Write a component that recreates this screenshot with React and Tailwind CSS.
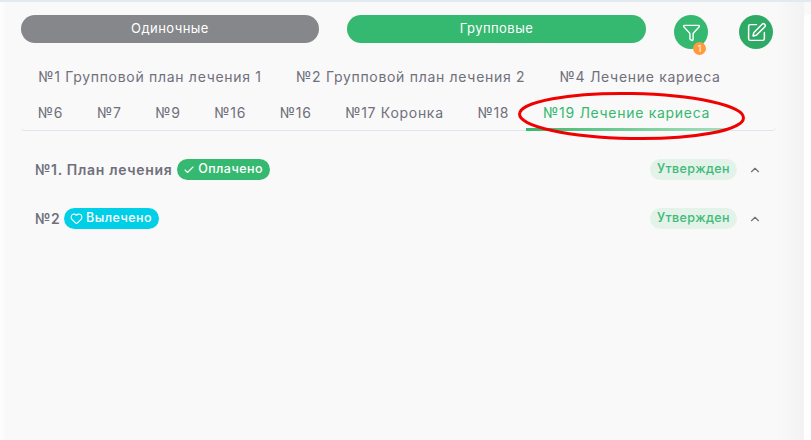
import React from "react";
import { Filter, SquarePen, Check, Heart, ChevronUp } from "lucide-react";

const font = { fontFamily: "Inter, 'Noto Sans', sans-serif" };
const row1 = ["№1 Групповой план лечения 1", "№2 Групповой план лечения 2", "№4 Лечение кариеса"];
const row2 = ["№6", "№7", "№9", "№16", "№16", "№17 Коронка", "№18"];

function Tab({ children, active, pad }) {
  return (
    <div className={"relative h-9 flex items-center text-[14px] tracking-[0.7px] whitespace-nowrap " + pad + " " + (active ? "text-[#35b86f]" : "text-[#70707c]")}>
      {children}
      {active && <div className="absolute left-0 right-0 -bottom-[1px] h-[3px] bg-gradient-to-r from-[#35b86f] to-[#a5dfbf]" />}
    </div>
  );
}

function Row({ title, badge }) {
  return (
    <div className="h-[49px] flex items-center pl-[14px] pr-[14px]">
      <span className="text-[14px] font-semibold tracking-[0.7px] text-[#70707c]">{title}</span>
      {badge}
      <span className="ml-auto h-[21px] w-[87px] rounded-full bg-[#e3f3e9] text-[#3fba77] text-[12.5px] font-medium tracking-[0.4px] flex items-center justify-center">Утвержден</span>
      <ChevronUp size={14} strokeWidth={2} className="ml-[11px] text-[#70707c]" />
    </div>
  );
}

export default function App() {
  return (
    <div style={font} className="relative w-[811px] h-[440px] overflow-hidden bg-[#f9f9f9] border-t-2 border-[#e3e9f1]">
      <div className="flex items-start pl-[21px] pt-[13px] w-[780px]">
        <button className="w-[298px] h-[28px] rounded-[14px] bg-[#85878a] text-white text-[13px] tracking-[0.45px]">Одиночные</button>
        <button className="ml-[28px] w-[299px] h-[28px] rounded-[14px] bg-[#35b86f] text-white text-[13px] tracking-[0.45px]">Групповые</button>
        <div className="relative ml-[28px] w-[34px] h-[34px] rounded-full bg-[#35b86f] flex items-center justify-center text-white">
          <Filter size={19} strokeWidth={1.8} />
          <span className="absolute left-[19px] top-[27px] w-[13px] h-[13px] rounded-full bg-[#ff9a3d] text-[9px] leading-[13px] text-center text-white">1</span>
        </div>
        <div className="ml-[31px] w-[34px] h-[34px] rounded-full bg-[#2faa66] flex items-center justify-center text-white">
          <SquarePen size={21} strokeWidth={1.7} />
        </div>
      </div>

      <div className="ml-[21px] mt-[9px] w-[755px] border-b border-[#dfe6ee] rounded-b-[4px]">
        <div className="flex">{row1.map((t) => <Tab key={t} pad="px-[17.15px]">{t}</Tab>)}</div>
        <div className="flex">
          {row2.map((t, i) => <Tab key={i} pad="px-[16.85px]">{t}</Tab>)}
          <Tab active pad="px-[17px]">№19 Лечение кариеса</Tab>
        </div>
      </div>

      <div className="ml-[21px] mt-[14px] w-[755px]">
        <Row
          title="№1. План лечения"
          badge={
            <span className="ml-[4px] h-[21px] w-[93px] rounded-full bg-[#35b86f] text-white text-[12.5px] font-medium tracking-[0.45px] flex items-center justify-center gap-[3px]">
              <Check size={12} strokeWidth={2.2} />Оплачено
            </span>
          }
        />
        <Row
          title="№2"
          badge={
            <span className="ml-[3px] h-[21px] w-[95px] rounded-full bg-[#00cfe8] text-white text-[12.5px] font-medium tracking-[0.45px] flex items-center justify-center gap-[3px]">
              <Heart size={13} strokeWidth={2} />Вылечено
            </span>
          }
        />
      </div>

      <div className="absolute top-0 left-0 bottom-0 w-[7px] bg-gradient-to-r from-[#fdfdfd] to-transparent" />
      <div className="absolute top-[13px] right-0 bottom-0 w-[7px] bg-white rounded-tl-[4px]" />
      <div className="absolute top-0 right-[7px] bottom-0 w-[28px] bg-gradient-to-r from-transparent to-[#f2f2f2]" />
      <svg className="absolute left-[515px] top-[86px]" width="235" height="60" viewBox="0 0 235 60">
        <ellipse cx="116.5" cy="28" rx="112" ry="22.5" fill="none" stroke="#f00000" strokeWidth="3" transform="rotate(1 116.5 28)" />
      </svg>
    </div>
  );
}
